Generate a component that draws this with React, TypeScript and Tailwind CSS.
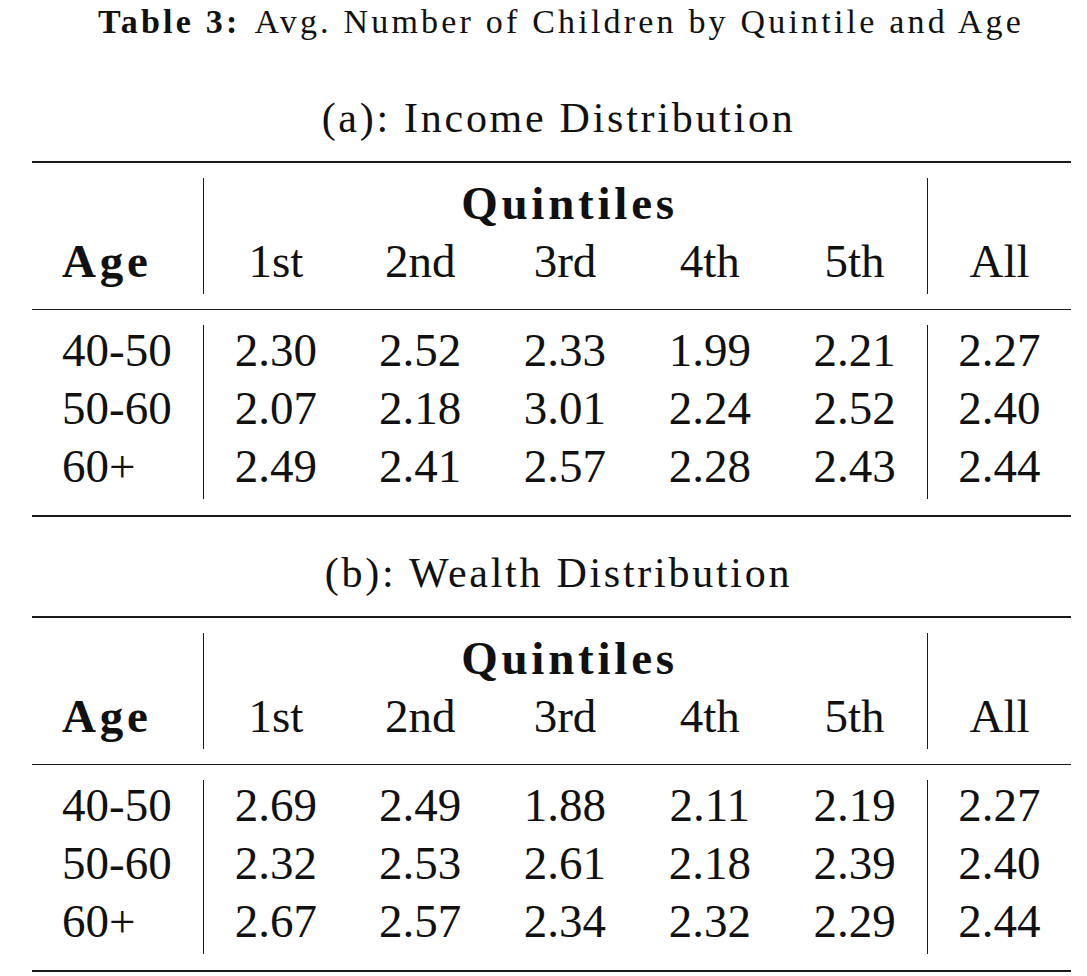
import React from 'react'

type Panel = {
  label: string
  rows: { age: string; values: string[]; all: string }[]
}

const panels: Panel[] = [
  {
    label: '(a): Income Distribution',
    rows: [
      { age: '40-50', values: ['2.30', '2.52', '2.33', '1.99', '2.21'], all: '2.27' },
      { age: '50-60', values: ['2.07', '2.18', '3.01', '2.24', '2.52'], all: '2.40' },
      { age: '60+', values: ['2.49', '2.41', '2.57', '2.28', '2.43'], all: '2.44' },
    ],
  },
  {
    label: '(b): Wealth Distribution',
    rows: [
      { age: '40-50', values: ['2.69', '2.49', '1.88', '2.11', '2.19'], all: '2.27' },
      { age: '50-60', values: ['2.32', '2.53', '2.61', '2.18', '2.39'], all: '2.40' },
      { age: '60+', values: ['2.67', '2.57', '2.34', '2.32', '2.29'], all: '2.44' },
    ],
  },
]

const quintiles = ['1st', '2nd', '3rd', '4th', '5th']

const grid = 'grid grid-cols-[171px_repeat(5,144.8px)_144px]'
const cell = 'h-[58px] leading-[50px] text-center'
const vline = 'border-l-[1.5px] border-[#1a1a1a]'

function PanelTable({ panel }: { panel: Panel }) {
  return (
    <div>
      {/* Panel caption */}
      <div className="h-[56px] pl-[14px] text-center text-[42px] leading-[56px] tracking-[0.065em]">
        {panel.label}
      </div>

      <div className="mt-[15px] border-t-2 border-[#1a1a1a]">
        {/* Header */}
        <div className={`${grid} py-[15px]`}>
          <div className="h-[58px]" />
          <div className={`col-span-5 ${cell} ${vline} pl-[8px] font-bold tracking-[0.08em]`}>Quintiles</div>
          <div className={`h-[58px] ${vline}`} />

          <div className="h-[58px] pl-[30px] text-left font-bold leading-[50px] tracking-[0.08em]">Age</div>
          {quintiles.map((q, i) => (
            <div key={q} className={`${cell} ${i === 0 ? vline : ''}`}>
              {q}
            </div>
          ))}
          <div className={`${cell} ${vline}`}>All</div>
        </div>

        {/* Body */}
        <div className={`${grid} border-t-[1.5px] border-[#1a1a1a] pt-[15px] pb-[16px]`}>
          {panel.rows.map((row) => (
            <React.Fragment key={row.age}>
              <div className="h-[58px] pl-[30px] leading-[50px]">{row.age}</div>
              {row.values.map((v, i) => (
                <div key={i} className={`${cell} ${i === 0 ? vline : ''}`}>
                  {v}
                </div>
              ))}
              <div className={`${cell} ${vline}`}>{row.all}</div>
            </React.Fragment>
          ))}
        </div>

        <div className="border-t-2 border-[#1a1a1a]" />
      </div>
    </div>
  )
}

export default function App() {
  return (
    <div
      className="min-h-screen w-[1087px] bg-white text-[47px] text-[#111]"
      style={{ fontFamily: '"Liberation Serif", "Times New Roman", serif' }}
    >
      {/* Table caption */}
      <div className="h-[44px] pl-[35px] text-center text-[34px] leading-[44px] tracking-[0.094em]">
        <span className="font-bold">Table 3:</span>
        <span className="pl-[14px]">Avg. Number of Children by Quintile and Age</span>
      </div>

      <div className="mx-[32px] mt-[46px] w-[1039px]">
        <PanelTable panel={panels[0]} />
        <div className="mt-[28px]">
          <PanelTable panel={panels[1]} />
        </div>
      </div>
    </div>
  )
}
